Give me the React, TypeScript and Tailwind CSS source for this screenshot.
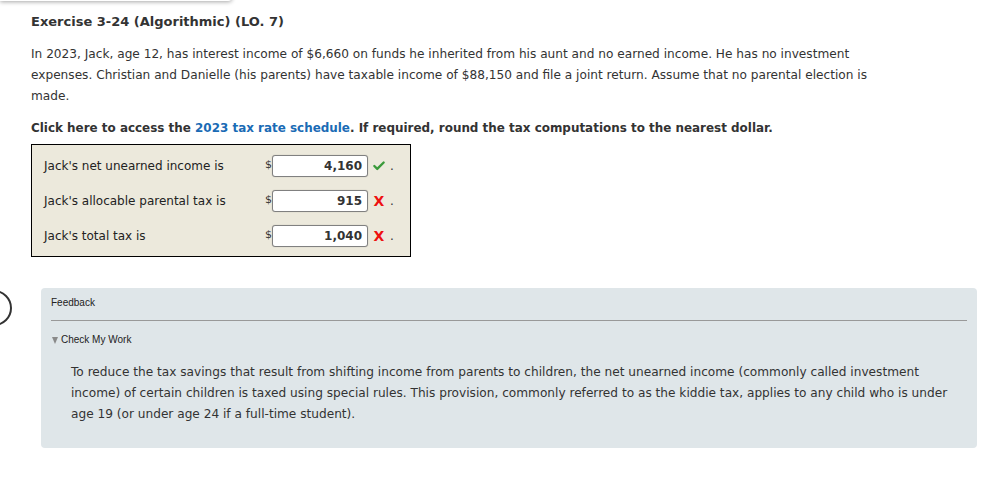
import { Check } from "lucide-react";

const rows = [
  { label: "Jack's net unearned income is", value: "4,160", ok: true },
  { label: "Jack's allocable parental tax is", value: "915", ok: false },
  { label: "Jack's total tax is", value: "1,040", ok: false },
];

export default function App() {
  return (
    <div className="relative w-[981px] h-[477px] overflow-hidden bg-white text-[#333] font-['DejaVu_Sans',Verdana,sans-serif] text-[12px]">
      {/* strip of the header above, only its shadow shows */}
      <div className="absolute left-0 top-[-10px] w-[232px] h-[11px] bg-white rounded-br shadow-[0_1px_4px_rgba(0,0,0,0.35)]" />

      {/* half-hidden circle at the left edge */}
      <div className="absolute left-[-24px] top-[290px] w-[36px] h-[36px] rounded-full border-2 border-[#333]" />

      <div className="pl-[31px] pr-[20px] pt-[13px]">
        <h1 className="font-bold text-[13px] leading-[17px] text-[#333]">
          Exercise 3-24 (Algorithmic) (LO. 7)
        </h1>

        <p className="mt-[14px] leading-[21px] text-[12.15px]">
          In 2023, Jack, age 12, has interest income of $6,660 on funds he inherited from his aunt and no earned income. He has no investment
          <br />
          expenses. Christian and Danielle (his parents) have taxable income of $88,150 and file a joint return. Assume that no parental election is
          <br />
          made.
        </p>

        <p className="mt-[11px] font-bold leading-[21px] text-[11.95px]">
          Click here to access the <span className="text-[#1a6bb5]">2023 tax rate schedule</span>. If required, round the tax computations to the nearest dollar.
        </p>

        <div className="mt-[5px] w-[380px] h-[113px] border border-black bg-[#ece9dc] pt-[3px]">
          {rows.map((r) => (
            <div key={r.label} className="flex items-center h-[35px]">
              <span className="w-[233px] pl-[12px] text-[#222]">{r.label}</span>
              <span className="text-[#333] text-[11px]">$</span>
              <div className="w-[96px] h-[22px] bg-white border border-[#808080] rounded-[3px] shadow-[0_0_1px_rgba(0,0,0,0.3)] flex items-center justify-end pr-[5px] font-bold text-[#333]">
                {r.value}
              </div>
              <span className="w-[22px] flex justify-center">
                {r.ok ? (
                  <Check className="w-[14px] h-[14px] text-[#3a9a3a]" strokeWidth={4} />
                ) : (
                  <span className="text-[#ee1111] font-bold text-[14px] leading-none">X</span>
                )}
              </span>
              <span>.</span>
            </div>
          ))}
        </div>
      </div>

      <div className="ml-[41px] mt-[31px] w-[936px] h-[160px] bg-[#dfe6e9] rounded-[4px] px-[10px] pt-[9px]">
        <div className="font-['Liberation_Sans',Arial,sans-serif] text-[10px] leading-[12px] text-[#222]">Feedback</div>
        <div className="mt-[11px] border-t border-[#999]" />
        <div className="mt-[13px] flex items-center gap-[3px] pl-[1px] font-['Liberation_Sans',Arial,sans-serif] text-[10px] leading-[12px] text-[#222]">
          <svg width="6" height="7" viewBox="0 0 6 7">
            <path d="M0 0 H6 L3 7 Z" fill="#8a8a8a" />
          </svg>
          <span>Check My Work</span>
        </div>
        <p className="mt-[16px] ml-[20px] leading-[21px] text-[12.15px] text-[#333]">
          To reduce the tax savings that result from shifting income from parents to children, the net unearned income (commonly called investment
          <br />
          income) of certain children is taxed using special rules. This provision, commonly referred to as the kiddie tax, applies to any child who is under
          <br />
          age 19 (or under age 24 if a full-time student).
        </p>
      </div>
    </div>
  );
}
